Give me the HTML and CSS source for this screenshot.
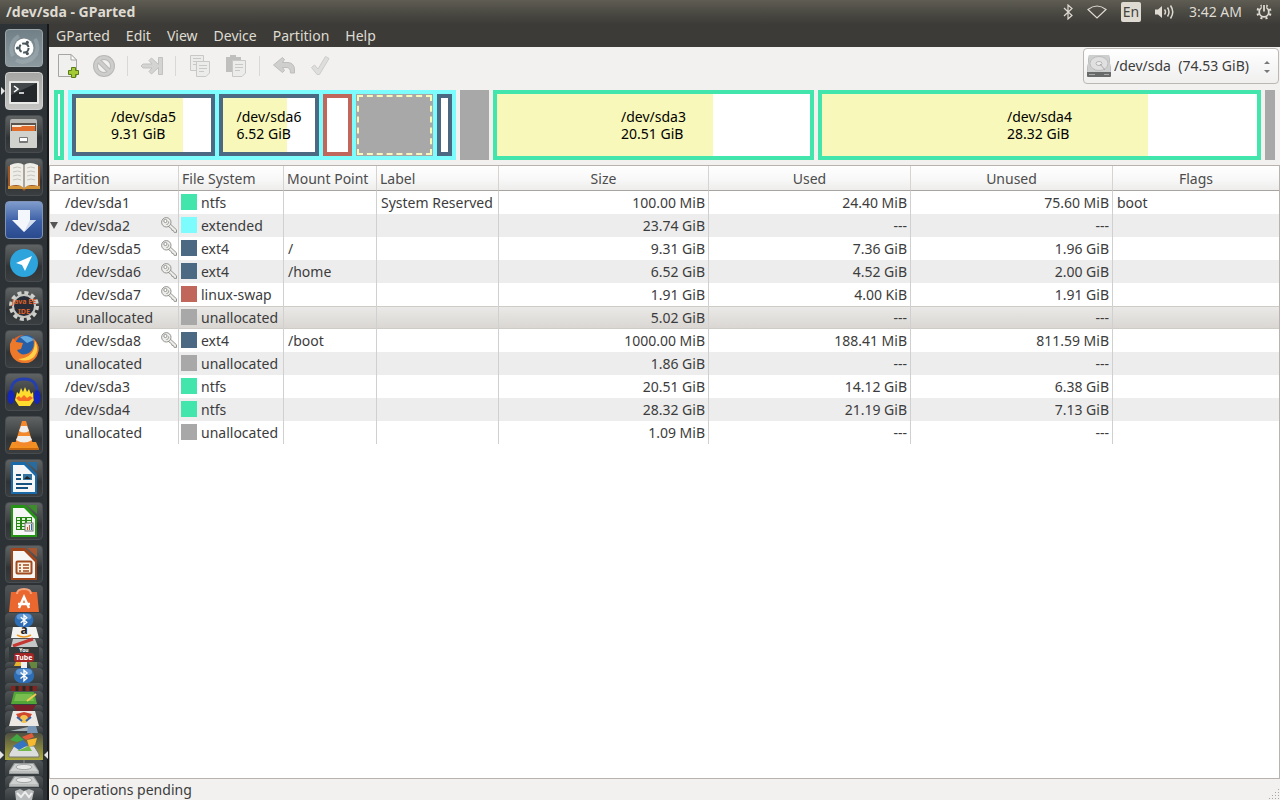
FILE: index.html
```html
<!DOCTYPE html>
<html lang="en">
<head>
    <meta charset="UTF-8">
    <meta name="viewport" content="width=device-width, initial-scale=1.0">
    <title>/dev/sda - GParted</title>
    <link rel="stylesheet" href="styles.css">
</head>
<body>
    <!-- shared icons -->
    <svg class="defs" width="0" height="0" aria-hidden="true">
        <symbol id="key" viewBox="0 0 16 16">
            <g stroke="#8a8a86" fill="#ededeb" stroke-width=".9" stroke-linejoin="round">
                <path d="M7 9.200 9.300 7 15.500 12.800V15.400H13.200L12.400 13.600 10.900 13.300 10.500 11.800Z"/>
                <circle cx="5.300" cy="5.300" r="4.700"/>
                <circle cx="4.400" cy="4" r="1.600" fill="#fff"/>
                <path d="M5.500 7.500C7 7.500 8 6 7.600 4.500" fill="none"/>
            </g>
        </symbol>
        <symbol id="bt" viewBox="0 0 22 15">
            <rect x="1" y="0" width="20" height="15" rx="7" fill="#2d6db5"/>
            <rect x="3" y="1" width="16" height="6" rx="4" fill="#5c95d2"/>
            <path d="M7.500 4.500 14 10 11 12.700V2.300L14 5 7.500 10.500" fill="none" stroke="#fff" stroke-width="1.400"/>
        </symbol>
        <symbol id="disk" viewBox="0 0 38 16">
            <path d="M9 3H29L34 11V14H4V11Z" fill="#989b9b"/>
            <path d="M10 4H28L33 11H5Z" fill="#cfd1d1"/>
            <ellipse cx="19" cy="7" rx="8" ry="2.600" fill="#e9e9e9" stroke="#a5a8a8"/>
            <path d="M5 12H33" stroke="#ddd"/>
        </symbol>
    </svg>

    <header class="panel">
        <h1 class="panel-title">/dev/sda - GParted</h1>
        <div class="indicators">
            <svg width="10" height="16" viewBox="0 0 10 16" fill="none" stroke="#dfdbd2" stroke-width="1.2"><path d="M1 4 9 11.5 5 15V1L9 4.5 1 12"/></svg>
            <svg width="20" height="14" viewBox="0 0 20 14" fill="none" stroke="#dfdbd2" stroke-width="1.2"><path d="M1 4.5Q10-2.5 19 4.5L10 13Z"/></svg>
            <span class="lang">En</span>
            <svg width="20" height="16" viewBox="0 0 20 16" fill="none" stroke="#dfdbd2" stroke-width="1.5"><path d="M0 5.500H3L7 2V14L3 10.500H0Z" fill="#dfdbd2" stroke="none"/><path d="M9.500 5.500Q11.500 8 9.500 10.500M12.500 3.500Q15.500 8 12.500 12.500M15.500 1.500Q20 8 15.500 14.500"/></svg>
            <time class="clock">3:42 AM</time>
            <svg width="16" height="16" viewBox="0 0 18 18" fill="none" stroke="#dfdbd2"><circle cx="9" cy="9" r="7.400" stroke-width="2.400" stroke-dasharray="2.400 3.410" transform="rotate(13 9 9)"/><circle cx="9" cy="9" r="5.400" stroke-width="2"/><path d="M9 0V8" stroke="#4f4d46" stroke-width="5"/><path d="M9 1V8.500" stroke-width="2"/></svg>
        </div>
    </header>

    <div class="desktop">
        <nav class="launcher" aria-label="Launcher">
            <button class="tile dash" aria-label="Dash"><svg viewBox="0 0 38 38"><path d="M8 27A15 15 0 0 1 14 7M30 10A15 15 0 0 1 25 31M11 31Q22 37 32 24" fill="none" stroke="#a6b2b7" stroke-width="4" opacity=".5"/><circle cx="19" cy="19" r="9.5" fill="#fff"/><circle cx="19" cy="19" r="4.6" fill="none" stroke="#4a565c" stroke-width="2" stroke-dasharray="8 1.6"/><g fill="#4a565c"><circle cx="12.5" cy="19" r="1.6"/><circle cx="22.3" cy="13.4" r="1.6"/><circle cx="22.3" cy="24.6" r="1.6"/></g></svg></button>
            <button class="tile light running" aria-label="Terminal"><svg viewBox="0 0 38 38"><rect x="4" y="9" width="30" height="23" rx="1" fill="#e9e9e7"/><rect x="6" y="11" width="26" height="19" fill="#25282a"/><path d="M6 11H32L6 23Z" fill="#43484a"/><path d="M9 14 13 17 9 20M14 21H19" fill="none" stroke="#fff" stroke-width="1.5"/></svg></button>
            <button class="tile" aria-label="Files"><svg viewBox="0 0 38 38"><rect x="5" y="4" width="27" height="29" rx="2" fill="#b9b9b5"/><rect x="6" y="8" width="25" height="8" fill="#5b534c"/><path d="M7 10H30V12H7Z" fill="#f4eadc"/><path d="M7 12H16L17 11H30V16H7Z" fill="#e06d2c"/><rect x="5" y="16" width="27" height="17" rx="1" fill="#d1d1cd"/><rect x="14" y="22" width="9" height="6" rx="1" fill="#777"/><rect x="15" y="23" width="7" height="3" fill="#fff"/></svg></button>
            <button class="tile" aria-label="Books"><svg viewBox="0 0 38 38"><path d="M3 8H35V31H21L19 33 17 31H3Z" fill="#9c5727"/><path d="M3 28H35V31H3Z" fill="#d49337"/><path d="M5 7Q14 3 19 7Q24 3 33 7V28Q24 25 19 30Q14 25 5 28Z" fill="#efede7"/><path d="M19 7V30" stroke="#aaa69d" stroke-width="2"/><path d="M8 10Q13 8 16 10M8 14Q13 12 16 14M8 18Q13 16 16 18M8 22Q13 20 16 22M22 10Q26 8 30 10M22 14Q26 12 30 14M22 18Q26 16 30 18M22 22Q26 20 30 22" fill="none" stroke="#c9c6bf"/></svg></button>
            <button class="tile blue" aria-label="Downloads"><svg viewBox="0 0 38 38"><path d="M13 9H25V19H31L19 31 7 19H13Z" fill="#f3f6fb"/><path d="M25 19H31L19 31Z" fill="#d5deee"/></svg></button>
            <button class="tile" aria-label="Telegram"><svg viewBox="0 0 38 38"><circle cx="19" cy="19" r="14" fill="#2da5dc"/><path d="M27 12 11 19 17 21 20 27Z" fill="#fff"/></svg></button>
            <button class="tile" aria-label="Java EE IDE"><svg viewBox="0 0 38 38"><circle cx="19" cy="19" r="13" fill="none" stroke="#cfcfcb" stroke-width="4" stroke-dasharray="4 2.8"/><circle cx="19" cy="19" r="11" fill="#282c36" stroke="#c5c5c1" stroke-width="2"/><g font-family="Noto Sans" font-weight="700" font-size="7" fill="#d9602a" text-anchor="middle"><text x="19" y="17">Java EE</text><text x="19" y="27">IDE</text></g></svg></button>
            <button class="tile" aria-label="Firefox"><svg viewBox="0 0 38 38"><circle cx="19" cy="19" r="14" fill="#e26424"/><circle cx="21" cy="16" r="11" fill="#265fa5"/><path d="M15 7Q23 4 29 10L22 13Z" fill="#65aade"/><path d="M28 8Q37 16 32 26Q25 37 12 31Q4 26 5 14L8 8 11 12 18 13 16 19 12 20Q16 27 24 23Q31 18 28 8Z" fill="#ed792b"/><path d="M30 11Q35 20 29 27Q22 33 13 29Q30 28 30 11Z" fill="#ffd04a"/></svg></button>
            <button class="tile" aria-label="Audacity"><svg viewBox="0 0 38 38"><path d="M6 21Q5 6 19 6T32 21" fill="none" stroke="#263faf" stroke-width="3"/><path d="M10 27 12 19 14 21 16 15 18 19 20 14 22 19 24 16 26 21 28 19 29 27 25 33H14Z" fill="#ffdb2e"/><path d="M11 25 14 23 16 25 19 22 22 25 25 23 28 25 24 28H14Z" fill="#f46b24"/><ellipse cx="6" cy="24" rx="3.5" ry="7" fill="#1626b9"/><ellipse cx="32" cy="24" rx="3.5" ry="7" fill="#1626b9"/></svg></button>
            <button class="tile" aria-label="VLC"><svg viewBox="0 0 38 38"><path d="M7 26H31L34 33H4Z" fill="#f39021"/><path d="M4 32H34V34H4Z" fill="#c76810"/><path d="M17 5H21L28 28Q19 33 10 28Z" fill="#f3882c"/><path d="M16 10H22L24 15Q19 18 14 15ZM13 20H25L27 24Q19 29 11 24Z" fill="#eee"/></svg></button>
            <button class="tile" aria-label="Writer"><svg viewBox="0 0 38 38"><path d="M6 3H20L32 15V35H6Z" fill="#1a69a8"/><path d="M8 6H19L30 17V33H8Z" fill="#f6f6f6"/><path d="M22 3H32V12Z" fill="#286b9f"/><path d="M11 16H16M11 20H16M11 25H27M11 29H23" stroke="#15527f" stroke-width="2"/><rect x="18" y="15" width="9" height="6" fill="#3474a1"/><path d="M19 20 22 17 26 20Z" fill="#222"/></svg></button>
            <button class="tile" aria-label="Calc"><svg viewBox="0 0 38 38"><path d="M6 3H20L32 15V35H6Z" fill="#249414"/><path d="M8 6H19L30 17V33H8Z" fill="#f6f6f6"/><path d="M22 3H32V12Z" fill="#3d8c2b"/><rect x="11" y="15" width="16" height="13" fill="#278516"/><path d="M12 17H15M17 17H20M22 17H26M12 20H15M17 20H20M22 20H26M12 23H15M17 23H20M12 26H15M17 26H20" stroke="#dff1d8" stroke-width="2"/><rect x="20" y="21" width="8" height="8" fill="#eee" stroke="#777"/><path d="M22.500 28V25M24.500 28V23" stroke="#d15c28"/><path d="M26.500 28V22" stroke="#2476b3"/></svg></button>
            <button class="tile" aria-label="Impress"><svg viewBox="0 0 38 38"><path d="M6 3H20L32 15V35H6Z" fill="#a24419"/><path d="M8 6H19L30 17V33H8Z" fill="#f6f6f6"/><path d="M22 3H32V12Z" fill="#a65631"/><rect x="11.500" y="16.500" width="15" height="12" rx="1" fill="#fff2e2" stroke="#a04a20" stroke-width="2"/><path d="M14 20H16M18 20H24M14 23H16M18 23H24M14 26H16M18 26H24" stroke="#a04a20" stroke-width="1.500"/></svg></button>

            <div class="fold">
                <button aria-label="Software Center"><svg width="38" height="28"><path d="M6 7H13V5H25V7H32L34 27H4Z" fill="#ea682f"/><path d="M12 9Q12 4 19 4T26 9" fill="none" stroke="#f5a47d" stroke-width="2"/><path d="M14 23 19 12 24 23M13 19H25" fill="none" stroke="#fff" stroke-width="2.400"/></svg></button>
                <button aria-label="Bluetooth"><svg width="38" height="14"><use href="#bt" x="8" width="22" height="14"/></svg></button>
                <button aria-label="Amazon"><svg width="38" height="11"><path d="M8 0H31L34 11H6Z" fill="#f3f3f1"/><text x="19" y="7" text-anchor="middle" font-family="Noto Sans" font-weight="700" font-size="12" fill="#222">a</text><path d="M12 8Q19 12 26 8" fill="none" stroke="#ee9a21" stroke-width="1.500"/></svg></button>
                <button aria-label="Draw"><svg width="38" height="9"><path d="M8 1H30L33 9H6Z" fill="#c4c7c7"/><path d="M8 8 28 1" stroke="#c53732" stroke-width="3"/></svg></button>
                <button aria-label="YouTube"><svg width="38" height="15"><rect x="4" width="30" height="15" fill="#333839"/><rect x="9" y="6" width="20" height="9" rx="3" fill="#a52625"/><g font-family="Noto Sans" font-weight="700" text-anchor="middle" fill="#fff"><text x="19" y="5" font-size="5">You</text><text x="19" y="13" font-size="7">Tube</text></g></svg></button>
                <button aria-label="Pidgin"><svg width="38" height="6"><path d="M9 4H17V0H11Z" fill="#e6b32f"/><path d="M16 0H22V6H16Z" fill="#eee"/><path d="M24 0H32V6H26Z" fill="#65863e"/></svg></button>
                <button aria-label="Bluetooth Manager"><svg width="38" height="15"><use href="#bt" x="8" width="22" height="15"/></svg></button>
                <button aria-label="Archive"><svg width="38" height="8"><rect x="6" y="3" width="26" height="5" fill="#7f2521"/><path d="M12 3V8M19 3V8M26 3V8" stroke="#252b24" stroke-width="3"/></svg></button>
                <button aria-label="Board"><svg width="38" height="14"><path d="M9 1H29L32 13H6Z" fill="#52a637"/><path d="M11 3H27L29 10H9Z" fill="#78bd4e"/><path d="M22 10 31 3" stroke="#f1cb53" stroke-width="2"/></svg></button>
                <button aria-label="Wine"><svg width="38" height="6"><path d="M7 0H31L27 6H12Z" fill="#781f2a"/></svg></button>
                <button aria-label="Mahjongg"><svg width="38" height="15"><path d="M8 0H30L34 15H4Z" fill="#ece9e4"/><path d="M11 3 19 1 27 3 24 8H14Z" fill="#cf472d"/><circle cx="19" cy="8" r="4" fill="#f1c24f"/><path d="M12 6 17 10M26 6 21 10" stroke="#3860a5" stroke-width="2"/></svg></button>
                <button aria-label="Scanner"><svg width="38" height="7"><path d="M5 5H23V1Z" fill="#a7b0b4"/><path d="M23 0H31L33 7H22Z" fill="#7796b5"/></svg></button>
                <button class="running active" aria-label="GParted"><svg width="38" height="27"><path d="M9 13H29L34 21V24H4V21Z" fill="#dcdede" stroke="#777"/><path d="M5 7 12 1 19 7 12 9Z" fill="#42a642"/><path d="M17 4 27 0 29 4 21 7Z" fill="#e05b3a"/><path d="M8 13 18 7 23 12 14 17Z" fill="#3473c2"/><path d="M22 7 32 5 30 12 24 14Z" fill="#f5b830"/><path d="M12 18 24 13 27 18Z" fill="#72b84b"/></svg></button>
                <button aria-label="Volume 1"><svg width="38" height="16"><path d="M19 0V5" stroke="#888"/><use href="#disk" width="38" height="16"/></svg></button>
                <button aria-label="Volume 2"><svg width="38" height="12"><use href="#disk" width="38" height="16" y="-3"/></svg></button>
                <button aria-label="Trash"><svg width="38" height="12"><path d="M10 3 15 1 19 3 24 1 29 3 27 12H11Z" fill="#b9bcbc"/><path d="M12 5 16 9 20 4 24 9 27 5" fill="none" stroke="#eee" stroke-width="2"/></svg></button>
            </div>
        </nav>

        <main class="window">
            <div class="menubar" role="menubar">
                <button role="menuitem">GParted</button>
                <button role="menuitem">Edit</button>
                <button role="menuitem">View</button>
                <button role="menuitem">Device</button>
                <button role="menuitem">Partition</button>
                <button role="menuitem">Help</button>
            </div>

            <div class="toolbar">
                <button aria-label="New"><svg viewBox="0 0 24 24"><path d="M2.500 .500H15L20.500 6V22.500H2.500Z" fill="#f0f0ef" stroke="#a5a5a2"/><path d="M15 .500V6H20.500Z" fill="#fff" stroke="#a5a5a2"/><path d="M15.500 13.500H19.500V16.500H22.500V20.500H19.500V23.500H15.500V20.500H12.500V16.500H15.500Z" fill="#a4cb35" stroke="#587d17"/></svg></button>
                <button aria-label="Delete" disabled><svg viewBox="0 0 24 24"><g fill="none" stroke="#b8b8b6" stroke-width="5"><circle cx="12" cy="12" r="8.500"/><path d="M6 6 18 18"/></g><g fill="none" stroke="#cdcdcb" stroke-width="3"><circle cx="12" cy="12" r="8.500"/><path d="M6 6 18 18"/></g></svg></button>
                <span class="sep"></span>
                <button aria-label="Resize/Move" disabled><svg viewBox="0 0 24 24"><path d="M3 10H12L9 6.500 11.500 4 18.500 10.500V3.500H22.500V20.500H18.500V13.500L11.500 20 9 17.500 12 14H3L1 12Z" fill="#d4d4d2" stroke="#c1c1bf"/></svg></button>
                <span class="sep"></span>
                <button aria-label="Copy" disabled><svg viewBox="0 0 24 24"><g fill="#ececeb" stroke="#c8c8c6"><path d="M2.500 1.500H15.500V16.500H2.500Z"/><path d="M5 4.500H13M5 7.500H13M5 10.500H10"/><path d="M8.500 7.500H21.500V19L18 22.500H8.500Z"/><path d="M11 11.500H19M11 14.500H19M11 17.500H16"/></g></svg></button>
                <button aria-label="Paste" disabled><svg viewBox="0 0 24 24"><path d="M2 3H6V1H12V3H17V18H2Z" fill="#bfbfbd"/><g fill="#ececeb" stroke="#c8c8c6"><path d="M8.500 6.500H21.500V19L18 22.500H8.500Z"/><path d="M11 10.500H19M11 13.500H19M11 16.500H16"/></g></svg></button>
                <span class="sep"></span>
                <button aria-label="Undo" disabled><svg viewBox="0 0 24 24"><path d="M1.500 11 10.500 3.500 12.500 5.500 10.500 8.500H16Q22.500 9 22.500 16V19H18.500Q18.500 14 15 13.500H10.500L12.500 16.500 10.500 18.500Z" fill="#cfcfcd" stroke="#bdbdbb"/></svg></button>
                <button aria-label="Apply" disabled><svg viewBox="0 0 24 24"><path d="M3.500 13.500 6.500 11 10 15 17.500 2.500 21 4.500 11.500 20.500H9Z" fill="#dededd" stroke="#ccccca"/></svg></button>
                <div class="device">
                    <svg class="device-icon" width="24" height="24" viewBox="0 0 24 24" aria-hidden="true"><path d="M2 1H22L24 18V22Q24 23 23 23H1Q0 23 0 22V18Z" fill="#696b6b"/><path d="M2 1H22L24 18H0Z" fill="#cdcfce"/><ellipse cx="12" cy="9.500" rx="9" ry="7" fill="#dfe0df" stroke="#bbb"/><ellipse cx="12" cy="9.500" rx="3" ry="2" fill="#eee" stroke="#b5b5b5"/><path d="M13 10 18 16" stroke="#aaa"/><path d="M2 20.500H8M17 20.500H22" stroke="#aaa"/></svg>
                    <select aria-label="Device">
                        <option>/dev/sda&nbsp; (74.53 GiB)</option>
                    </select>
                    <svg class="device-arrows" width="8" height="14" viewBox="0 0 8 14" fill="#777" aria-hidden="true"><path d="M1 4 4 1 7 4ZM1 10 4 13 7 10Z"/></svg>
                </div>
            </div>

            <div class="disk">
                <div class="part ntfs"></div>
                <div class="extended">
                    <div class="part ext4"><div class="used" style="width: 79%"></div><p>/dev/sda5<br>9.31 GiB</p></div>
                    <div class="part ext4"><div class="used" style="width: 70%"></div><p>/dev/sda6<br>6.52 GiB</p></div>
                    <div class="part swap"></div>
                    <div class="free selected"></div>
                    <div class="part ext4"></div>
                </div>
                <div class="free"></div>
                <div class="part ntfs"><div class="used" style="width: 69%"></div><p>/dev/sda3<br>20.51 GiB</p></div>
                <div class="part ntfs"><div class="used" style="width: 75%"></div><p>/dev/sda4<br>28.32 GiB</p></div>
                <div class="free"></div>
            </div>

            <div class="list">
                <table>
                    <colgroup>
                        <col class="c-part"><col class="c-fs"><col class="c-mount"><col class="c-label"><col class="c-size"><col class="c-used"><col class="c-used"><col>
                    </colgroup>
                    <thead>
                        <tr><th>Partition</th><th>File System</th><th>Mount Point</th><th>Label</th><th class="mid">Size</th><th class="mid">Used</th><th class="mid">Unused</th><th class="mid">Flags</th></tr>
                    </thead>
                    <tbody>
                        <tr><td><div class="name">/dev/sda1</div></td><td><div class="fs"><i class="ntfs"></i>ntfs</div></td><td></td><td>System Reserved</td><td>100.00 MiB</td><td>24.40 MiB</td><td>75.60 MiB</td><td>boot</td></tr>
                        <tr><td><div class="name"><button class="expander" aria-label="Collapse"></button>/dev/sda2<svg class="key"><use href="#key"/></svg></div></td><td><div class="fs"><i class="ext"></i>extended</div></td><td></td><td></td><td>23.74 GiB</td><td>---</td><td>---</td><td></td></tr>
                        <tr><td><div class="name child">/dev/sda5<svg class="key"><use href="#key"/></svg></div></td><td><div class="fs"><i class="ext4"></i>ext4</div></td><td>/</td><td></td><td>9.31 GiB</td><td>7.36 GiB</td><td>1.96 GiB</td><td></td></tr>
                        <tr><td><div class="name child">/dev/sda6<svg class="key"><use href="#key"/></svg></div></td><td><div class="fs"><i class="ext4"></i>ext4</div></td><td>/home</td><td></td><td>6.52 GiB</td><td>4.52 GiB</td><td>2.00 GiB</td><td></td></tr>
                        <tr><td><div class="name child">/dev/sda7<svg class="key"><use href="#key"/></svg></div></td><td><div class="fs"><i class="swap"></i>linux-swap</div></td><td></td><td></td><td>1.91 GiB</td><td>4.00 KiB</td><td>1.91 GiB</td><td></td></tr>
                        <tr class="current"><td><div class="name child">unallocated</div></td><td><div class="fs"><i class="none"></i>unallocated</div></td><td></td><td></td><td>5.02 GiB</td><td>---</td><td>---</td><td></td></tr>
                        <tr><td><div class="name child">/dev/sda8<svg class="key"><use href="#key"/></svg></div></td><td><div class="fs"><i class="ext4"></i>ext4</div></td><td>/boot</td><td></td><td>1000.00 MiB</td><td>188.41 MiB</td><td>811.59 MiB</td><td></td></tr>
                        <tr><td><div class="name">unallocated</div></td><td><div class="fs"><i class="none"></i>unallocated</div></td><td></td><td></td><td>1.86 GiB</td><td>---</td><td>---</td><td></td></tr>
                        <tr><td><div class="name">/dev/sda3</div></td><td><div class="fs"><i class="ntfs"></i>ntfs</div></td><td></td><td></td><td>20.51 GiB</td><td>14.12 GiB</td><td>6.38 GiB</td><td></td></tr>
                        <tr><td><div class="name">/dev/sda4</div></td><td><div class="fs"><i class="ntfs"></i>ntfs</div></td><td></td><td></td><td>28.32 GiB</td><td>21.19 GiB</td><td>7.13 GiB</td><td></td></tr>
                        <tr><td><div class="name">unallocated</div></td><td><div class="fs"><i class="none"></i>unallocated</div></td><td></td><td></td><td>1.09 MiB</td><td>---</td><td>---</td><td></td></tr>
                    </tbody>
                </table>
            </div>

            <footer class="statusbar">
                <span>0 operations pending</span>
                <svg width="12" height="12" viewBox="0 0 12 12" fill="#aaa69f" aria-hidden="true"><path d="M10 1h1v1h-1zM7 4h1v1h-1zM10 4h1v1h-1zM4 7h1v1h-1zM7 7h1v1h-1zM10 7h1v1h-1zM1 10h1v1h-1zM4 10h1v1h-1zM7 10h1v1h-1zM10 10h1v1h-1z"/></svg>
            </footer>
        </main>
    </div>
</body>
</html>
```

FILE: styles.css
```css
* {
    box-sizing: border-box;
}
body {
    margin: 0;
    height: 100vh;
    display: flex;
    flex-direction: column;
    font-family: "Noto Sans", sans-serif;
    font-size: 14px;
    line-height: 18px;
    color: #3c3c3c;
    background: #f2f1f0;
    overflow: hidden;
}
button,
select {
    font: inherit;
    color: inherit;
    border: none;
    background: none;
    padding: 0;
    margin: 0;
}
svg {
    display: block;
}
.defs {
    position: absolute;
}

/* top panel */
.panel {
    height: 24px;
    flex: none;
    display: flex;
    align-items: center;
    justify-content: space-between;
    padding: 0 8px 0 6px;
    color: #dfdbd2;
    background: linear-gradient(#5f5d53, #4b4a43 50%, #3d3c38);
}
.panel-title {
    margin: 0;
    font-size: 14px;
    line-height: 18px;
}
.indicators {
    display: flex;
    align-items: center;
    gap: 14px;
}
.lang {
    width: 20px;
    height: 20px;
    border-radius: 2px;
    background: #dfdbd2;
    color: #45443f;
    text-align: center;
    line-height: 20px;
}

.desktop {
    flex: 1;
    min-height: 0;
    display: flex;
}

/* launcher */
.launcher {
    width: 49px;
    flex: none;
    display: flex;
    flex-direction: column;
    gap: 5px;
    padding: 5px 0 0 5px;
    background: #2c3235;
    border-right: 2px solid #151719;
}
.launcher button {
    display: block;
    position: relative;
    flex: none;
}
.tile {
    width: 38px;
    height: 38px;
    border: 1px solid #484c4e;
    border-radius: 4px;
    background: linear-gradient(#606364, #404445 45%, #2f3335 60%, #3a3e40);
}
.tile svg {
    width: 38px;
    height: 38px;
    margin: -1px;
}
.launcher .tile {
    border: 1px solid #484c4e;
    background: linear-gradient(#606364, #404445 45%, #2f3335 60%, #3a3e40);
}
.launcher .dash {
    background: linear-gradient(#718087, #8c999f);
    border-color: #9da7ab;
}
.launcher .light {
    background: linear-gradient(#a6a6a4, #c4c4c2);
    border-color: #d0d0ce;
}
.launcher .blue {
    background: linear-gradient(#7f9ccc, #3a5ea5 55%, #2b4a8d);
    border-color: #8094b8;
}
.running::before {
    content: "";
    position: absolute;
    left: -5px;
    top: 50%;
    border: 4px solid transparent;
    border-left: 4px solid #e4e4e4;
    border-right: none;
    margin-top: -4px;
}
.active::after {
    content: "";
    position: absolute;
    right: -5px;
    top: 50%;
    border: 4px solid transparent;
    border-right: 4px solid #e4e4e4;
    border-left: none;
    margin-top: -4px;
}
.fold .active::before,
.fold .active::after {
    top: 80%;
}
.fold {
    margin-top: -3px;
}
.fold button {
    width: 38px;
    border-radius: 4px 4px 0 0;
    background: linear-gradient(#505456, #363b3d);
}
.fold svg {
    overflow: visible;
}
.fold .active {
    background: linear-gradient(#4e5042, #aeab3d);
}

/* gparted window */
.window {
    flex: 1;
    min-width: 0;
    display: flex;
    flex-direction: column;
}
.menubar {
    height: 23px;
    flex: none;
    display: flex;
    gap: 2px;
    background: #3c3b37;
    color: #dfdbd2;
}
.menubar button {
    padding: 0 7px;
}
.toolbar {
    height: 38px;
    flex: none;
    display: flex;
    align-items: center;
    padding: 0 1px 0 7px;
}
.toolbar > button {
    width: 24px;
    height: 24px;
    margin-right: 12px;
}
.sep {
    width: 1px;
    height: 20px;
    margin: 0 12px 0 -1px;
    background: #dad8d5;
}
.device {
    position: relative;
    margin-left: auto;
}
.device select {
    appearance: none;
    width: 196px;
    height: 36px;
    padding-left: 30px;
    border: 1px solid #bbb7b2;
    border-radius: 4px;
    background: linear-gradient(#fff, #f0efee);
}
.device-icon {
    position: absolute;
    left: 4px;
    top: 6px;
}
.device-arrows {
    position: absolute;
    right: 8px;
    top: 12px;
}

/* disk map */
.disk {
    flex: none;
    height: 80px;
    padding: 5px;
    display: grid;
    grid-template-columns: minmax(0, 10fr) minmax(0, 388fr) minmax(0, 29fr) minmax(0, 321fr) minmax(0, 443fr) minmax(0, 10fr);
    gap: 4px;
    color: #000;
}
.extended {
    display: grid;
    grid-template-columns: minmax(0, 143fr) minmax(0, 100fr) minmax(0, 29fr) minmax(0, 77fr) minmax(0, 15fr);
    gap: 4px;
    padding: 4px;
    background: #7dfcfe;
}
.part {
    display: grid;
    border: 4px solid;
    background: #fff;
}
.part.ntfs { border-color: #42e5ac; }
.part.ext4 { border-color: #4b6983; }
.part.swap { border-color: #c1665a; }
.part > * {
    grid-area: 1 / 1;
}
.part p {
    margin: 0;
    place-self: center;
    line-height: 17px;
    white-space: nowrap;
}
.used {
    background: #f8f8ba;
}
.free {
    background: #a8a8a8;
}
.selected {
    outline: 2px dashed #f8f8ba;
    outline-offset: -3px;
}

/* partition list */
.list {
    flex: 1;
    min-height: 0;
    background: #fff;
    border: 1px solid #b8b3ae;
}
table {
    width: 100%;
    table-layout: fixed;
    border-collapse: separate;
    border-spacing: 0;
}
.c-part { width: 129px; }
.c-fs { width: 105px; }
.c-mount { width: 93px; }
.c-label { width: 122px; }
.c-size { width: 210px; }
.c-used { width: 202px; }
th {
    height: 25px;
    padding: 2px 3px 0;
    font-weight: normal;
    text-align: left;
    white-space: nowrap;
    color: #4c4c4c;
    background: linear-gradient(#fff, #f9f9f9 50%, #eeedec);
    border-right: 1px solid #d6d3d0;
    border-bottom: 1px solid #a9a49f;
}
.mid {
    text-align: center;
}
td {
    height: 23px;
    padding: 0 3px 0 4px;
    white-space: nowrap;
    border-right: 1px solid #d0d0d0;
}
th:last-child,
td:last-child {
    border-right: none;
}
td:nth-child(n+5):nth-child(-n+7) {
    text-align: right;
}
tbody tr:nth-child(even) {
    background: #ededed;
}
tbody tr.current:nth-child(even) {
    background: linear-gradient(#ebeae8, #d9d6d2);
    box-shadow: inset 0 1px #cfccc8, inset 0 -1px #cfccc8;
}
.name {
    display: flex;
    align-items: center;
    padding-left: 11px;
    position: relative;
}
.child {
    padding-left: 22px;
}
.key {
    width: 16px;
    height: 16px;
    margin: 0 -2px 2px auto;
}
.expander {
    position: absolute;
    left: -4px;
    top: 5px;
    border: 4px solid transparent;
    border-top: 7px solid #555;
    border-bottom: none;
}
.fs {
    display: flex;
    align-items: center;
    gap: 4px;
    margin-left: -2px;
}
.fs i {
    width: 16px;
    height: 16px;
    margin-bottom: 2px;
    flex: none;
}
i.ntfs { background: #42e5ac; }
i.ext { background: #7dfcfe; }
i.ext4 { background: #4b6983; }
i.swap { background: #c1665a; }
i.none { background: #a8a8a8; }

.statusbar {
    height: 21px;
    flex: none;
    display: flex;
    align-items: center;
    justify-content: space-between;
    padding-left: 2px;
}
.statusbar svg {
    align-self: flex-end;
}
```
